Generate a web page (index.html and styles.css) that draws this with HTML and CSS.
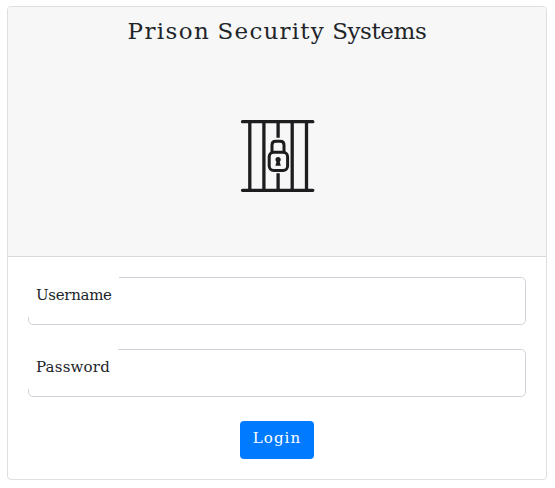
FILE: index.html
```html
<!DOCTYPE html>
<html lang="en">
<head>
<meta charset="utf-8">
<title>Prison Security Systems</title>
<link rel="stylesheet" href="styles.css">
</head>
<body>
<main class="card">
  <header class="card-header">
    <h1 class="title"><span class="prison">Prison</span> <span class="security">Security</span> <span class="systems">Systems</span></h1>
    <svg class="logo" width="76" height="76" viewBox="240 119 76 76" fill="none" stroke="#1d1d1f" stroke-width="3.3" stroke-linecap="round" aria-hidden="true">
      <path d="M242.5 121.7H312.8M242.5 190.3H312.8"/>
      <path stroke-linecap="butt" d="M249.8 122V190M263.9 122V190M278.1 122V137.7M278.1 173.3V190M292.2 122V190M306.5 122V190"/>
      <path stroke-width="3" d="M272 152V145Q272 141.2 275.8 141.2H280.2Q284 141.2 284 145V152"/>
      <rect x="269.2" y="152.3" width="18.4" height="18.2" rx="4.5" stroke-width="3"/>
      <circle cx="278.1" cy="159.5" r="2.6" fill="#1d1d1f" stroke="none"/>
      <path fill="#1d1d1f" stroke="none" d="M277 160H279.2L280.8 165.7H275.4Z"/>
    </svg>
  </header>
  <form class="card-body">
    <div class="field"><label class="username" for="username">Username</label><input id="username" type="text"></div>
    <div class="field"><label class="password" for="password">Password</label><input id="password" type="password"></div>
    <button class="login" type="button">Login</button>
  </form>
</main>
</body>
</html>
```
FILE: styles.css
```css
* { box-sizing: border-box; }
body {
  margin: 0;
  padding: 6px 8px 8px 7px;
  background: #fff;
  color: #212529;
  font: 15px/24px "DejaVu Serif", serif;
}
.card {
  height: 474px;
  border: 1px solid #dfdfdf;
  border-radius: 4px;
  overflow: hidden;
}
.card-header {
  height: 250px;
  padding-top: 9px;
  background: #f7f7f7;
  border-bottom: 1px solid #dadada;
  display: flex;
  flex-direction: column;
  align-items: center;
}
.title {
  margin: 0;
  font-size: 23px;
  line-height: 30px;
  font-weight: 400;
  white-space: nowrap;
}
.prison { letter-spacing: 1.4px; }
.security { letter-spacing: 1.2px; }
.systems { letter-spacing: -0.4px; }
.logo { margin: 73px 0 0 1px; }
.card-body {
  padding: 20px;
  display: flex;
  flex-direction: column;
  align-items: center;
  gap: 24px;
}
.field {
  position: relative;
  width: 498px;
  height: 48px;
}
.field input {
  display: block;
  width: 100%;
  height: 100%;
  border: 1px solid #ced4da;
  border-radius: 5px;
  padding: 8px 12px 8px 96px;
  font: inherit;
  outline: 0;
}
.field label {
  position: absolute;
  left: 0;
  top: 0;
  width: 91px;
  height: 40px;
  padding: 6px 8px;
  background: #fff;
  letter-spacing: -0.3px;
}
.field .password { width: 90px; letter-spacing: 0.2px; }
.login {
  width: 74px;
  height: 38px;
  padding: 0 0 5px;
  border: 0;
  border-radius: 4px;
  background: #007bff;
  color: #fff;
  font: 15px/24px "DejaVu Serif", serif;
  letter-spacing: 1.1px;
}
```
